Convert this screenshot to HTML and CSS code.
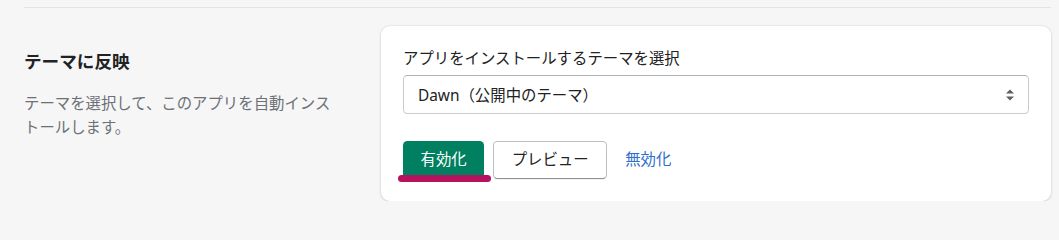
FILE: index.html
```html
<!DOCTYPE html>
<html lang="ja">
<head>
<meta charset="utf-8">
<link rel="stylesheet" href="styles.css">
</head>
<body>
<div class="page">
  <div class="divider"></div>
  <div class="section">
    <div class="aside">
      <h2 class="title">テーマに反映</h2>
      <p class="desc">テーマを選択して、このアプリを自動インストールします。</p>
    </div>
    <div class="card">
      <div class="label">アプリをインストールするテーマを選択</div>
      <div class="select">
        <span class="select-text">Dawn（公開中のテーマ）</span>
        <svg class="select-arrow" width="10" height="14" viewBox="0 0 10 14" aria-hidden="true">
          <path d="M5 1.5 L9 5.5 L1 5.5 Z" fill="#5c5f62"/>
          <path d="M5 12.5 L9 8.5 L1 8.5 Z" fill="#5c5f62"/>
        </svg>
      </div>
      <div class="actions">
        <div class="primary-wrap">
          <button class="btn btn-primary">有効化</button>
          <span class="mark"></span>
        </div>
        <button class="btn btn-secondary">プレビュー</button>
        <a class="link" href="#">無効化</a>
      </div>
    </div>
  </div>
</div>
</body>
</html>
```
FILE: styles.css
```css
* { box-sizing: border-box; }
html, body {
  margin: 0;
  padding: 0;
  background: #f6f6f7;
  font-family: "Noto Sans", "Noto Sans CJK JP", sans-serif;
  color: #202223;
}
.page {
  padding: 7px 8px 0 24px;
}
.divider {
  height: 1px;
  background: #e1e3e5;
}
.section {
  display: flex;
  margin-top: 18px;
}
.aside {
  width: 357px;
  flex: none;
  padding-top: 23px;
}
.title {
  margin: 0;
  font-size: 17.6px;
  line-height: 24px;
  font-weight: 700;
  color: #202223;
}
.desc {
  margin: 19px 0 0;
  width: 314px;
  font-size: 15.4px;
  line-height: 24px;
  color: #6d7175;
}
.card {
  flex: 1;
  background: #ffffff;
  border-radius: 9px;
  box-shadow: 0 0 0 1px rgba(63, 63, 68, 0.05), 0 1px 3px rgba(63, 63, 68, 0.15);
  padding: 22px;
}
.label {
  font-size: 15.4px;
  line-height: 22px;
  margin-bottom: 5px;
  color: #202223;
}
.select {
  height: 39px;
  border: 1px solid #c9cccf;
  border-top-color: #aeb4b9;
  border-radius: 4.4px;
  display: flex;
  align-items: center;
  justify-content: space-between;
  padding: 0 13px 0 14px;
  font-size: 15.4px;
  color: #202223;
}
.select-arrow {
  display: block;
}
.actions {
  display: flex;
  align-items: center;
  margin-top: 27px;
}
.primary-wrap {
  position: relative;
  display: flex;
}
.btn {
  height: 38px;
  font-family: inherit;
  font-size: 15.4px;
  line-height: 22px;
  border-radius: 4.4px;
  cursor: pointer;
  margin: 0;
  white-space: nowrap;
  flex: none;
}
.btn-primary {
  background: #008060;
  color: #ffffff;
  border: 0;
  padding: 0 17.5px;
}
.btn-secondary {
  margin-left: 9px;
  background: #ffffff;
  color: #202223;
  border: 1px solid #babfc3;
  border-bottom-color: #8c9196;
  box-shadow: 0 1px 0 rgba(0, 0, 0, 0.05);
  padding: 0 17.5px;
}
.link {
  margin-left: 18px;
  color: #2c6ecb;
  text-decoration: none;
  font-size: 15.4px;
  line-height: 22px;
  white-space: nowrap;
}
.mark {
  position: absolute;
  left: -5px;
  right: -7px;
  top: 34px;
  height: 7px;
  border-radius: 4px;
  background: #b5135f;
}
```
